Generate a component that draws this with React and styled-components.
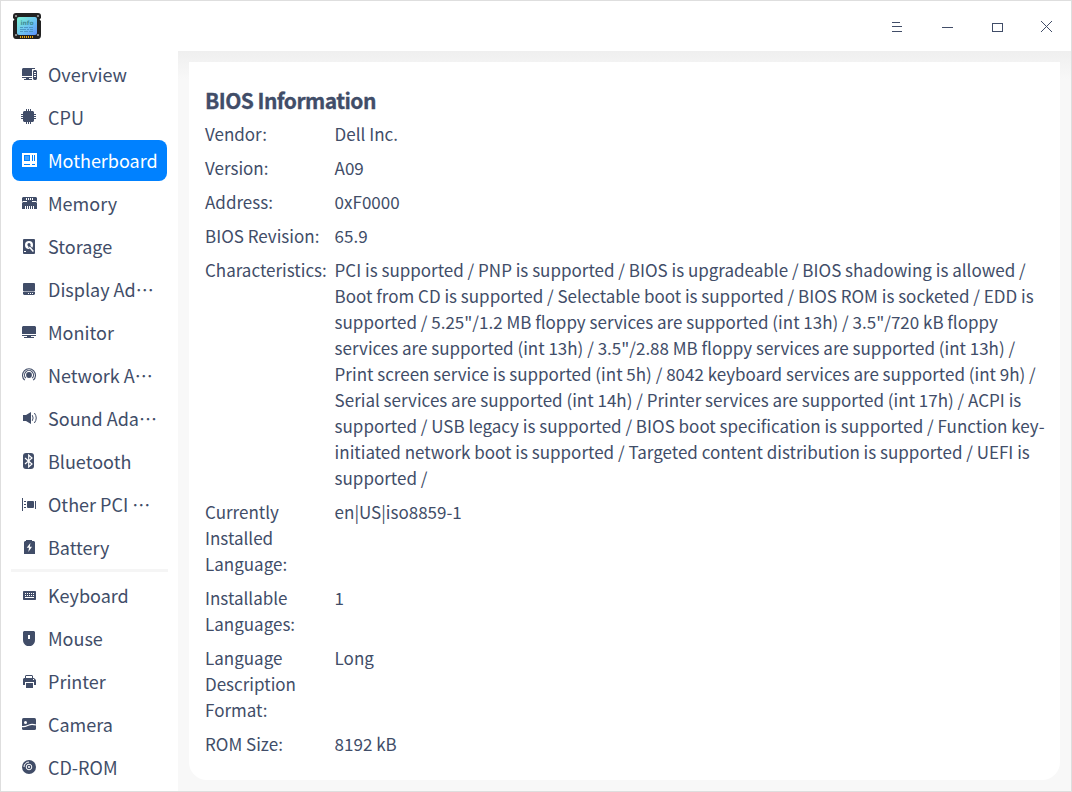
import React from "react";
import styled, { createGlobalStyle } from "styled-components";

const ink = "#414d68";

const GlobalStyle = createGlobalStyle`
  * { box-sizing: border-box; }
  body { margin: 0; background: #fff; overflow: hidden; }
`;

const Window = styled.div`
  width: 1072px;
  height: 792px;
  display: flex;
  flex-direction: column;
  border: 1px solid #dedede;
  background: #fff;
  color: ${ink};
  font-family: "Noto Sans CJK SC", "Noto Sans", sans-serif;
  overflow: hidden;
`;

const TitleBar = styled.header`
  flex: 0 0 50px;
  display: flex;
  align-items: center;
  justify-content: space-between;
  padding-left: 11px;
`;

const Controls = styled.div`
  display: flex;
  height: 50px;
`;

const ControlButton = styled.button`
  width: 50px;
  height: 50px;
  padding: 0;
  border: 0;
  background: none;
  display: flex;
`;

const Body = styled.div`
  flex: 1;
  display: flex;
  min-height: 0;
`;

const Sidebar = styled.nav`
  flex: 0 0 177px;
  min-width: 0;
  padding: 3px 11px 0;
  display: flex;
  flex-direction: column;
  gap: 2px;
`;

const NavItem = styled.a`
  flex: 0 0 41px;
  display: flex;
  align-items: flex-start;
  border-radius: 8px;
  padding: 0 0 0 9px;
  color: ${(p) => (p.$active ? "#fff" : ink)};
  background: ${(p) => (p.$active ? "#0081ff" : "transparent")};
  --hole: ${(p) => (p.$active ? "#0081ff" : "#fff")};
`;

const NavIcon = styled.svg`
  flex: 0 0 16px;
  width: 16px;
  height: 16px;
  margin-top: 12px;
`;

const NavLabel = styled.span`
  margin-left: 11px;
  font-size: 18px;
  line-height: 41px;
  white-space: nowrap;
`;

const Divider = styled.hr`
  flex: 0 0 3px;
  width: 157px;
  margin: -1px -1px 1px -1px;
  border: 0;
  background: #f5f5f5;
`;

const Content = styled.main`
  flex: 1;
  display: flex;
  padding: 11px 11px 11px;
  background: linear-gradient(#efefef, #f8f8f8 28px);
`;

const Panel = styled.section`
  flex: 1;
  background: #fff;
  border-radius: 0 0 18px 18px;
  padding: 21px 14px 0 16px;
`;

const Heading = styled.h1`
  margin: 0 0 4px;
  font-size: 21px;
  letter-spacing: -0.55px;
  line-height: 34px;
  font-weight: 700;
  -webkit-text-stroke: 0.3px ${ink};
`;

const Facts = styled.dl`
  margin: 0;
  display: grid;
  grid-template-columns: 122px 1fr;
  column-gap: 7.6px;
  row-gap: 8px;
  font-size: 17px;
  line-height: 26px;
`;

const Term = styled.dt`
  margin: 0;
`;

const Value = styled.dd`
  margin: 0;
`;

const H = "var(--hole)";
const C = "currentColor";

const icons = {
  overview: (
    <>
      <path fill={C} d="M2 2h12v1h-3v7H1V3zM1 11h10v1H1zM5 12h3v1H5zM3 13h8v1H3z" />
      <path fill={C} d="M13 4h2l1 1v8l-1 1h-2l-1-1V5z" />
      <path fill={H} d="M13 6h2v1h-2zM13 8h2v1h-2zM13 10h2v1h-2z" />
    </>
  ),
  cpu: (
    <path
      fill={C}
      d="M3 2h2V0h1v2h1V0h1v2h1V0h1v2h2l1 1v2h2v1h-2v1h2v1h-2v1h2v1h-2v2l-1 1h-2v2H9v-2H8v2H7v-2H6v2H5v-2H3l-1-1v-2H0V9h2V8H0V7h2V6H0V5h2V3z"
    />
  ),
  motherboard: (
    <>
      <path fill={C} d="M1 1h15v14H1z" />
      <path fill={H} d="M3 3h6v6H3zM11 3h1v6h-1zM13 3h1v6h-1zM3 12h6v1H3zM11 12h3v1h-3z" />
      <path fill={C} opacity=".25" d="M4 4h4v4H4z" />
    </>
  ),
  memory: (
    <>
      <path fill={C} d="M2 2h13l1 1v3l-1 1 1 1v6H1V8l1-1-1-1V3z" />
      <path
        fill={H}
        d="M5 3h1v2H5zM7 3h1v2H7zM9 3h1v2H9zM11 3h1v2h-1zM2 6h4v1H2zM11 6h4v1h-4zM4 11h1v3H4zM6 11h1v3H6zM8 11h1v3H8zM10 11h1v3h-1zM12 11h1v3h-1z"
      />
    </>
  ),
  storage: (
    <>
      <rect fill={C} x="2" y="1" width="12" height="15" rx="1" />
      <circle cx="8" cy="7" r="4" fill={H} />
      <circle cx="8" cy="6.7" r="1.6" fill={C} />
      <path d="m8 8 4 5" stroke={C} strokeWidth="2.6" />
      <path d="m8.4 9 4 4.6" stroke={H} strokeWidth="1.5" />
      <path fill={H} d="M3 13h2v1H3z" />
    </>
  ),
  display: (
    <>
      <rect fill={C} x="2" y="2" width="12" height="8.5" rx="1" />
      <path fill={C} d="M2 11h12v2l-1 1H3l-1-1z" />
      <path fill={H} d="M7 12h1v1H7zM9 12h1v1H9zM11 12h1v1h-1z" />
    </>
  ),
  monitor: (
    <>
      <path fill={C} d="M2 2h12l1 1v7H1V3zM1 11h14v1H1zM6 12h4v1H6zM3 13h10v1H3z" />
    </>
  ),
  network: (
    <g fill="none" stroke={C} strokeWidth="1.1">
      <circle cx="8" cy="8" r="2.9" fill={C} stroke="none" />
      <path d="M4.8 11.2a4.5 4.5 0 1 1 6.4 0M3.8 13.2a6.5 6.5 0 1 1 8.4 0" />
    </g>
  ),
  sound: (
    <>
      <path fill={C} d="M2 5h3l5-3v12l-5-3H2z" />
      <path fill="none" stroke={C} d="M11.3 5.2q1.6 2.8 0 5.6M13.4 3q3.7 5 0 10" />
    </>
  ),
  bluetooth: (
    <>
      <rect fill={C} x="2" y="0" width="11" height="16" rx="3" />
      <path fill="none" stroke={H} strokeWidth="1.2" d="m4 5 7 6-3.3 3V2L11 5l-7 6" />
    </>
  ),
  pci: (
    <>
      <path fill={C} d="M1 2h1v13H1zM3 5h2v1H3zM3 8h2v1H3zM3 11h2v1H3zM14 5h1v8h-1z" />
      <rect fill={C} x="6" y="5" width="7" height="7" rx="1" />
    </>
  ),
  battery: (
    <>
      <path fill={C} d="M5 1h6v1h2l1 1v12H3V3l1-1h1z" />
      <path fill={H} d="M9.4 4 5.7 8.8H8L7.3 13 11 7.8H8.8z" />
    </>
  ),
  keyboard: (
    <>
      <rect fill={C} x="2" y="4" width="13" height="9" rx=".7" />
      <path
        fill={H}
        d="M4 6h1v1H4zM6 6h1v1H6zM8 6h1v1H8zM10 6h1v1h-1zM12 6h1v1h-1zM4 8h1v1H4zM6 8h1v1H6zM8 8h1v1H8zM10 8h1v1h-1zM12 8h1v1h-1zM4 10h9v1H4z"
      />
    </>
  ),
  mouse: (
    <>
      <path fill={C} d="M3 1h10l1 1v8q0 4-4 6H6q-4-2-4-6V2z" />
      <path fill={H} d="M7 5h2v4H7z" />
    </>
  ),
  printer: (
    <>
      <path fill={C} d="M4 5V3l1-1h6l1 1v2h-1V3H5v2zM3 5h10l2 2v5h-2V9H4v3H2V6z" />
      <path fill={C} d="M5 10h7v5H5z" />
      <path fill={H} d="M12 6h1v1h-1z" />
    </>
  ),
  camera: (
    <>
      <rect fill={C} x="1" y="2" width="14" height="12" rx="1.5" />
      <circle cx="4.5" cy="6.5" r="1.5" fill={H} />
      <path fill="none" stroke={H} d="M1 10.5c3 .8 5-.8 7-1.6s4-.9 7 .2" strokeWidth="1.1" />
    </>
  ),
  cdrom: (
    <>
      <circle cx="8" cy="8" r="7" fill={C} />
      <g fill="none" stroke={H}>
        <circle cx="8" cy="8" r="2.8" />
        <path d="M3 8a5 5 0 0 1 5-5" />
      </g>
      <circle cx="8" cy="8" r="1" fill={H} />
    </>
  ),
};

const devices = [
  ["overview", "Overview"],
  ["cpu", "CPU"],
  ["motherboard", "Motherboard"],
  ["memory", "Memory"],
  ["storage", "Storage"],
  ["display", "Display Ad…"],
  ["monitor", "Monitor"],
  ["network", "Network A…"],
  ["sound", "Sound Ada…"],
  ["bluetooth", "Bluetooth"],
  ["pci", "Other PCI …"],
  ["battery", "Battery"],
];

const peripherals = [
  ["keyboard", "Keyboard"],
  ["mouse", "Mouse"],
  ["printer", "Printer"],
  ["camera", "Camera"],
  ["cdrom", "CD-ROM"],
];

const facts = [
  ["Vendor:", "Dell Inc."],
  ["Version:", "A09"],
  ["Address:", "0xF0000"],
  ["BIOS Revision:", "65.9"],
  [
    "Characteristics:",
    'PCI is supported / PNP is supported / BIOS is upgradeable / BIOS shadowing is allowed / Boot from CD is supported / Selectable boot is supported / BIOS ROM is socketed / EDD is supported / 5.25"/1.2 MB floppy services are supported (int 13h) / 3.5"/720 kB floppy services are supported (int 13h) / 3.5"/2.88 MB floppy services are supported (int 13h) / Print screen service is supported (int 5h) / 8042 keyboard services are supported (int 9h) / Serial services are supported (int 14h) / Printer services are supported (int 17h) / ACPI is supported / USB legacy is supported / BIOS boot specification is supported / Function key-initiated network boot is supported / Targeted content distribution is supported / UEFI is supported /',
  ],
  ["Currently Installed Language:", "en|US|iso8859-1"],
  ["Installable Languages:", "1"],
  ["Language Description Format:", "Long"],
  ["ROM Size:", "8192 kB"],
];

const controls = [
  ["Menu", "M21 21h8v1h-8zM21 25h10v1H21zM21 30h10v1H21z"],
  ["Minimize", "M21 26h11v1H21z"],
  ["Maximize", "M21 22h11v9H21zM22 23v7h9v-7z"],
];

function AppLogo() {
  return (
    <svg width="30" height="30" viewBox="0 0 30 30" aria-label="Device info">
      <defs>
        <linearGradient id="screen" x1="0" y1="0" x2="1" y2="1">
          <stop offset="0" stopColor="#7df3d0" />
          <stop offset=".5" stopColor="#6fc8f0" />
          <stop offset="1" stopColor="#5c92fb" />
        </linearGradient>
      </defs>
      <path
        fill="#222"
        d="M4 2h22q3 0 3 3v2l-1.500 1.500L29 10v14q0 4-3 4H4q-3 0-3-4V10l1.500-1.500L1 7V5q0-3 3-3z"
      />
      <g fill="#aaa">
        <circle cx="4" cy="5" r="1" />
        <circle cx="26" cy="5" r="1" />
        <circle cx="4" cy="24" r="1" />
        <circle cx="26" cy="24" r="1" />
      </g>
      <rect x="5" y="6" width="20" height="18" rx="2" fill="url(#screen)" />
      <text x="8.500" y="14" fontFamily="DejaVu Sans" fontSize="6" fontWeight="700" textLength="13" fill="#3f8d96">
        info
      </text>
      <path
        stroke="#4a91c0"
        strokeWidth=".9"
        fill="none"
        d="M8 16.500h3m1 0h4m1 0h4M8 18.500h6m1 0h2m1 0h3M8 20.500h3m1 0h4m1 0h4"
      />
      <path fill="#e9a60c" d="M8 25h1v2H8zM10 25h1v2h-1zM12 25h1v2h-1zM14 25h1v2h-1zM16 25h1v2h-1zM18 25h1v2h-1zM20 25h1v2h-1z" />
    </svg>
  );
}

function NavRow({ icon, label }) {
  return (
    <NavItem $active={icon === "motherboard"}>
      <NavIcon viewBox="0 0 16 16">{icons[icon]}</NavIcon>
      <NavLabel lang="zh-CN">{label}</NavLabel>
    </NavItem>
  );
}

export default function App() {
  return (
    <Window>
      <GlobalStyle />
      <TitleBar>
        <AppLogo />
        <Controls>
          {controls.map(([name, d]) => (
            <ControlButton key={name} aria-label={name}>
              <svg width="50" height="50">
                <path d={d} fill={ink} fillRule="evenodd" />
              </svg>
            </ControlButton>
          ))}
          <ControlButton aria-label="Close">
            <svg width="50" height="50" shapeRendering="crispEdges">
              <path d="m20 20 11 11M31 20 20 31" stroke={ink} fill="none" />
            </svg>
          </ControlButton>
        </Controls>
      </TitleBar>
      <Body>
        <Sidebar>
          {devices.map(([icon, label]) => (
            <NavRow key={icon} icon={icon} label={label} />
          ))}
          <Divider />
          {peripherals.map(([icon, label]) => (
            <NavRow key={icon} icon={icon} label={label} />
          ))}
        </Sidebar>
        <Content>
          <Panel>
            <Heading>BIOS Information</Heading>
            <Facts>
              {facts.map(([term, value]) => (
                <React.Fragment key={term}>
                  <Term>{term}</Term>
                  <Value>{value}</Value>
                </React.Fragment>
              ))}
            </Facts>
          </Panel>
        </Content>
      </Body>
    </Window>
  );
}
